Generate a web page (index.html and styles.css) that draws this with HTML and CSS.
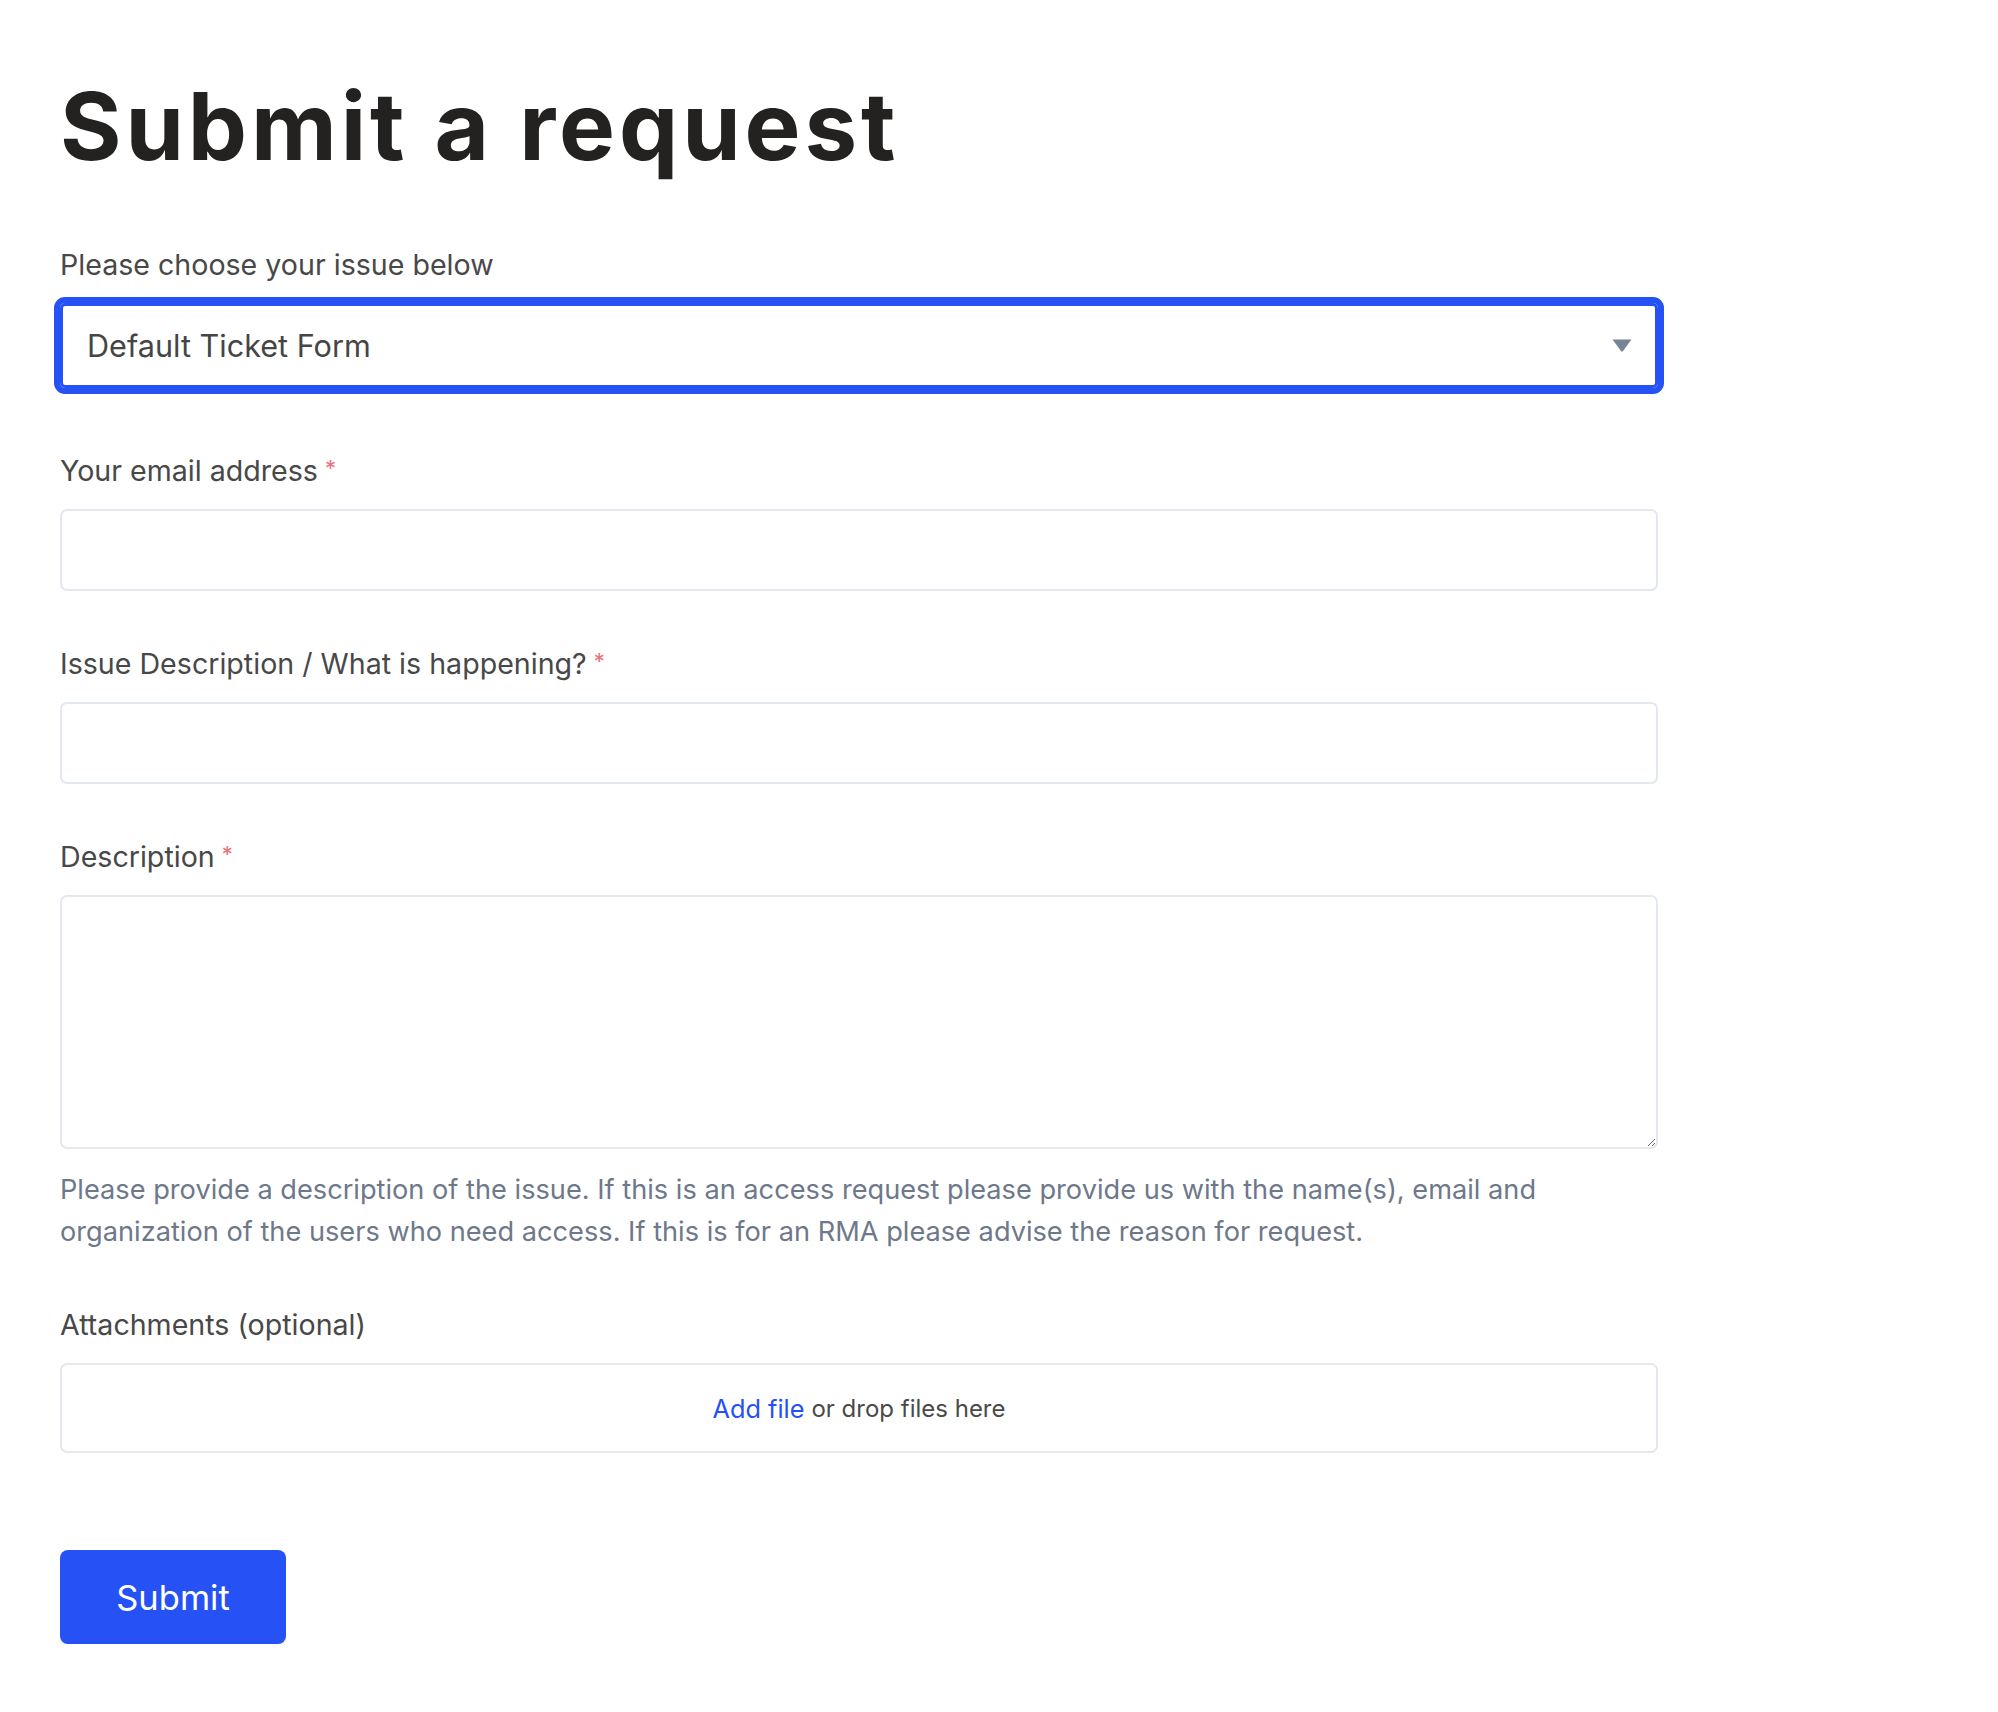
FILE: index.html
```html
<!DOCTYPE html>
<html lang="en">
<head>
<meta charset="utf-8">
<title>Submit a request</title>
<link rel="stylesheet" href="styles.css">
</head>
<body>
<main class="page">
  <h1 class="title">Submit a request</h1>
  <form class="form">
    <div class="field field-select">
      <label class="label">Please choose your issue below</label>
      <div class="select">
        <span class="select-value">Default Ticket Form</span>
        <svg class="select-arrow" width="20" height="13" viewBox="0 0 20 13"><path d="M0.5 0.5 H19.5 L11 12 Q10 13 9 12 Z" fill="#778397"/></svg>
      </div>
    </div>
    <div class="field">
      <label class="label">Your email address<span class="req">*</span></label>
      <input class="input" type="text">
    </div>
    <div class="field">
      <label class="label">Issue Description / What is happening?<span class="req">*</span></label>
      <input class="input" type="text">
    </div>
    <div class="field field-desc">
      <label class="label">Description<span class="req">*</span></label>
      <textarea class="textarea"></textarea>
      <p class="hint">Please provide a description of the issue. If this is an access request please provide us with the name(s), email and organization of the users who need access. If this is for an RMA please advise the reason for request.</p>
    </div>
    <div class="field field-attach">
      <label class="label">Attachments (optional)</label>
      <div class="dropzone"><a class="addfile" href="#">Add file</a> or drop files here</div>
    </div>
    <div class="actions">
      <button class="submit" type="button">Submit</button>
    </div>
  </form>
</main>
</body>
</html>
```
FILE: styles.css
```css
* { box-sizing: border-box; }
html, body { margin: 0; padding: 0; background: #fff; }
body {
  font-family: Inter, "Noto Sans", "DejaVu Sans", sans-serif;
  color: #444;
}
.page {
  padding: 70px 0 0 60px;
  width: 1658px;
}
.title {
  margin: 0;
  font-family: Inter, "Noto Sans", sans-serif;
  font-weight: 700;
  font-size: 94px;
  line-height: 112px;
  letter-spacing: 3.9px;
  color: #242220;
}
.form {
  display: flex;
  flex-direction: column;
  margin-top: 63px;
}
.field {
  display: flex;
  flex-direction: column;
  margin-bottom: 53px;
}
.field-select { margin-bottom: 63px; }
.label {
  font-size: 28.6px;
  line-height: 40px;
  color: #484848;
  margin-bottom: 18px;
  display: flex;
  align-items: flex-start;
}
.req {
  color: #e87276;
  font-size: 22px;
  line-height: 28px;
  margin-top: 3px;
  margin-left: 7px;
}
.select {
  height: 85px;
  border: 3px solid #2551f5;
  box-shadow: 0 0 0 6px #2551f5;
  border-radius: 5px;
  display: flex;
  align-items: center;
  justify-content: space-between;
  padding: 0 23px 0 24px;
}
.select-value {
  font-size: 30.6px;
  color: #454545;
}
.select-arrow { display: block; }
.input {
  height: 82px;
  border: 2px solid #e3e7ee;
  border-radius: 7px;
  background: #fff;
  font: inherit;
  outline: none;
}
.textarea {
  height: 254px;
  border: 2px solid #e3e7ee;
  border-radius: 7px;
  resize: vertical;
  font: inherit;
  outline: none;
}
.hint {
  margin: 20px 0 0;
  font-size: 27.2px;
  line-height: 42px;
  color: #6e788b;
}
.field-desc { margin-bottom: 52px; }
.dropzone {
  height: 90px;
  border: 2px solid #e3e7ee;
  border-radius: 7px;
  display: flex;
  align-items: center;
  justify-content: center;
  font-size: 24px;
  color: #4a4a4a;
}
.addfile {
  color: #2551f5;
  text-decoration: none;
  font-size: 25.3px;
  margin-right: 7px;
}
.field-attach { margin-bottom: 97px; }
.actions { display: flex; }
.submit {
  width: 226px;
  height: 94px;
  background: #2551f5;
  color: #fff;
  border: none;
  border-radius: 8px;
  font-family: Inter, "Noto Sans", sans-serif;
  font-size: 34.5px;
  box-shadow: 0 3px 0 #eef0f4;
}
```
